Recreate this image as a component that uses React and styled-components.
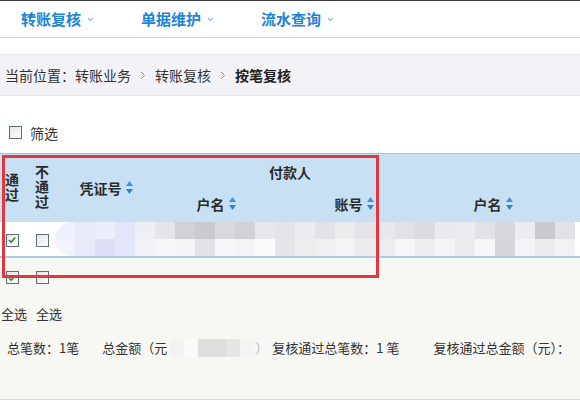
import styled, { createGlobalStyle } from "styled-components";

const GlobalStyle = createGlobalStyle`
	html, body {
		margin: 0;
		padding: 0;
		background: #fff;
	}
	body {
		font-family: "Noto Sans CJK SC", "Noto Sans", sans-serif;
		color: #333;
		font-size: 13px;
	}
	* {
		box-sizing: border-box;
	}
`;

// blurred data in the first row (two rows of mosaic blocks)
const blurTop = [
	"#eef0fb", "#e8eaf8", "#eceefa", "#e3e5f8", "#eeeff3", "#e6e6ea", "#d2d2d6",
	"#cbcbcf", "#d9d9dd", "#d2d2d6", "#e8e8ec", "#e4e4e8", "#ececf0", "#e3e3e7",
	"#ececee", "#e4e4e8", "#e8e8ec", "#e2e2e6", "#dcdce0", "#eaeaee", "#ececef",
	"#e3e3e7", "#d8d8dc", "#ececef", "#cacace", "#e2e2e6",
];
const blurBottom = [
	"#f2f3fc", "#e9ebfb", "#dcdff7", "#e4e6fa", "#f3f3f7", "#f7f7f9", "#f4f4f6",
	"#e2e2e6", "#f6f6f8", "#f4f4f6", "#fafafa", "#e6e6ea", "#eeeeef", "#f0f0f2",
	"#f4f4f6", "#ececee", "#ededf0", "#f6f6f8", "#eeeef0", "#f4f4f6", "#ebebee",
	"#f6f6f8", "#d6d6da", "#f4f4f6", "#ececef", "#f2f2f4",
];
const blurAmount = ["#f2f2f2", "#f9f9f9", "#dedede", "#dedede", "#e6e6e6", "#f4f4f4"];

const Chevron = () => (
	<svg width='7' height='5' viewBox='0 0 7 5'>
		<path d='M1 1 L3.5 3.5 L6 1' fill='none' stroke='#8fb3d8' strokeWidth='1.1' />
	</svg>
);

const Sep = () => (
	<svg width='6' height='9' viewBox='0 0 6 9'>
		<path d='M1 1 L4.5 4.5 L1 8' fill='none' stroke='#8a8a8a' strokeWidth='1' />
	</svg>
);

const SortIcon = () => (
	<svg width='7' height='13' viewBox='0 0 7 13'>
		<path d='M3.5 0 L7 5 L0 5 Z' fill='#3a93dc' />
		<path d='M0 8 L7 8 L3.5 13 Z' fill='#2a85d2' />
	</svg>
);

const Check = ({ checked }) => (
	<Box>
		{checked && (
			<svg width='10' height='10' viewBox='0 0 10 10'>
				<path d='M2 5 L4.2 7.2 L8.2 2.6' fill='none' stroke='#2f7d2f' strokeWidth='1.6' />
			</svg>
		)}
	</Box>
);

const App = () => {
	return (
		<Page>
			<GlobalStyle />
			<NavBar>
				<NavItem>
					转账复核
					<Chevron />
				</NavItem>
				<NavItem>
					单据维护
					<Chevron />
				</NavItem>
				<NavItem>
					流水查询
					<Chevron />
				</NavItem>
			</NavBar>

			<Crumbs>
				<span>当前位置：转账业务</span>
				<Sep />
				<span>转账复核</span>
				<Sep />
				<b>按笔复核</b>
			</Crumbs>

			<FilterRow>
				<Check />
				<span>筛选</span>
			</FilterRow>

			<Content>
				<TableWrap>
					<Grid>
						<colgroup>
							<col width='24' />
							<col width='36' />
							<col width='92' />
							<col width='128' />
							<col width='148' />
							<col width='130' />
							<col />
						</colgroup>
						<thead>
							<tr>
								<Th rowSpan={2}>
									<Stack>通过</Stack>
								</Th>
								<Th rowSpan={2}>
									<Stack>不通过</Stack>
								</Th>
								<Th rowSpan={2}>
									<Sortable>
										凭证号
										<SortIcon />
									</Sortable>
								</Th>
								<Th colSpan={2} $group>
									付款人
								</Th>
								<Th colSpan={2} $group />
							</tr>
							<tr>
								<Th $sub>
									<Sortable>
										户名
										<SortIcon />
									</Sortable>
								</Th>
								<Th $sub>
									<Sortable>
										账号
										<SortIcon />
									</Sortable>
								</Th>
								<Th $sub>
									<Sortable>
										户名
										<SortIcon />
									</Sortable>
								</Th>
								<Th $sub />
							</tr>
						</thead>
						<tbody>
							<Row>
								<Td>
									<Check checked />
								</Td>
								<Td>
									<Check />
								</Td>
								<Td colSpan={5}>
									<Mosaic>
										<MosaicLine>
											{blurTop.map((c, i) => (
												<Block key={i} style={{ background: c }} />
											))}
										</MosaicLine>
										<MosaicLine>
											{blurBottom.map((c, i) => (
												<Block key={i} style={{ background: c }} />
											))}
										</MosaicLine>
									</Mosaic>
								</Td>
							</Row>
							<Row $footer>
								<Td>
									<Check checked />
								</Td>
								<Td>
									<Check />
								</Td>
								<Td colSpan={5} />
							</Row>
						</tbody>
					</Grid>
					<Highlight />
				</TableWrap>

				<SelectAll>
					<span>全选</span>
					<span>全选</span>
				</SelectAll>

				<Summary>
					<Stat>总笔数：1笔</Stat>
					<Stat $gap={4}>
						总金额（元
						<Hidden>
							{blurAmount.map((c, i) => (
								<Block key={i} style={{ background: c }} $small />
							))}
						</Hidden>
						<Faint>）</Faint>
					</Stat>
					<Stat $gap={34}>复核通过总笔数：1 笔</Stat>
					<Stat>复核通过总金额（元）：</Stat>
				</Summary>
			</Content>
		</Page>
	);
};

const Page = styled.div`
	width: 580px;
	height: 412px;
	overflow: hidden;
	background: #fff;
`;

const NavBar = styled.div`
	display: flex;
	align-items: center;
	height: 38px;
	padding: 0 0 1px 21px;
	border-top: 1px solid #3a3a3a;
	border-bottom: 1px solid #d4d4d4;
`;

const NavItem = styled.div`
	display: flex;
	align-items: center;
	gap: 6px;
	width: 120px;
	color: #1d84d8;
	font-size: 15px;
	font-weight: 700;
	line-height: 20px;
	svg {
		margin-top: 2px;
	}
`;

const Crumbs = styled.div`
	display: flex;
	align-items: center;
	gap: 9px;
	margin-top: 16px;
	height: 42px;
	padding-left: 5px;
	background: #f3f3f7;
	border-top: 1px solid #e6e6ec;
	border-bottom: 1px solid #e6e6ec;
	font-size: 14px;
	line-height: 20px;
	color: #333;
	b {
		color: #222;
		font-weight: 700;
	}
`;

const FilterRow = styled.div`
	display: flex;
	align-items: center;
	gap: 8px;
	height: 57px;
	padding: 16px 0 0 9px;
	font-size: 14px;
	color: #333;
`;

const Box = styled.span`
	display: inline-flex;
	align-items: center;
	justify-content: center;
	width: 13px;
	height: 13px;
	border: 1px solid #5f6f80;
	background: linear-gradient(135deg, #e4e4e4 0%, #ffffff 100%);
	vertical-align: middle;
`;

const Content = styled.div`
	height: 247px;
	background: #f7f7f3;
	border-bottom: 1px solid #dcdcdc;
`;

const TableWrap = styled.div`
	position: relative;
`;

const Grid = styled.table`
	width: 100%;
	table-layout: fixed;
	border-collapse: collapse;
	border-spacing: 0;
	border-top: 1px solid #9cc6e9;
`;

const Th = styled.th`
	background: #c8e0f4;
	padding: 0;
	font-size: 14px;
	font-weight: 700;
	color: #2b2b2b;
	text-align: center;
	vertical-align: middle;
	line-height: 20px;
	height: ${(p) => (p.$group ? "36px" : p.$sub ? "32px" : "auto")};
	${(p) => p.$sub && "vertical-align: top; padding-top: 4px;"}
`;

const Stack = styled.span`
	display: inline-block;
	width: 1em;
	line-height: 15px;
	word-break: break-all;
`;

const Sortable = styled.span`
	display: inline-flex;
	align-items: center;
	gap: 4px;
`;

const Row = styled.tr`
	height: ${(p) => (p.$footer ? "38px" : "35px")};
	background: ${(p) => (p.$footer ? "#f7f7f3" : "#fff")};
	border-bottom: ${(p) => (p.$footer ? "none" : "2px solid #a8cdeb")};
`;

const Td = styled.td`
	padding: 0;
	text-align: center;
	vertical-align: middle;
`;

const Mosaic = styled.div`
	display: flex;
	flex-direction: column;
	margin-left: -5px;
	border-radius: 17px 0 0 17px;
	overflow: hidden;
`;

const MosaicLine = styled.div`
	display: flex;
	height: 17px;
`;

const Block = styled.span`
	flex: none;
	width: ${(p) => (p.$small ? "14px" : "20px")};
	height: 100%;
`;

const Highlight = styled.div`
	position: absolute;
	top: 2px;
	left: 2px;
	width: 377px;
	height: 123px;
	border: 3px solid #e8353b;
	pointer-events: none;
`;

const SelectAll = styled.div`
	display: flex;
	gap: 9px;
	height: 34px;
	align-items: center;
	padding: 3px 0 0 1px;
	font-size: 13px;
	color: #333;
`;

const Summary = styled.div`
	display: flex;
	align-items: center;
	height: 38px;
	padding-left: 7px;
	font-size: 13px;
	color: #333;
	white-space: nowrap;
`;

const Stat = styled.span`
	display: inline-flex;
	align-items: center;
	margin-right: ${(p) => (p.$gap ?? 23) + "px"};
`;

const Hidden = styled.span`
	display: inline-flex;
	height: 18px;
	margin: 0 1px 0 3px;
	border-radius: 4px;
	overflow: hidden;
`;

const Faint = styled.span`
	color: #bdbdbd;
`;

export default App;
